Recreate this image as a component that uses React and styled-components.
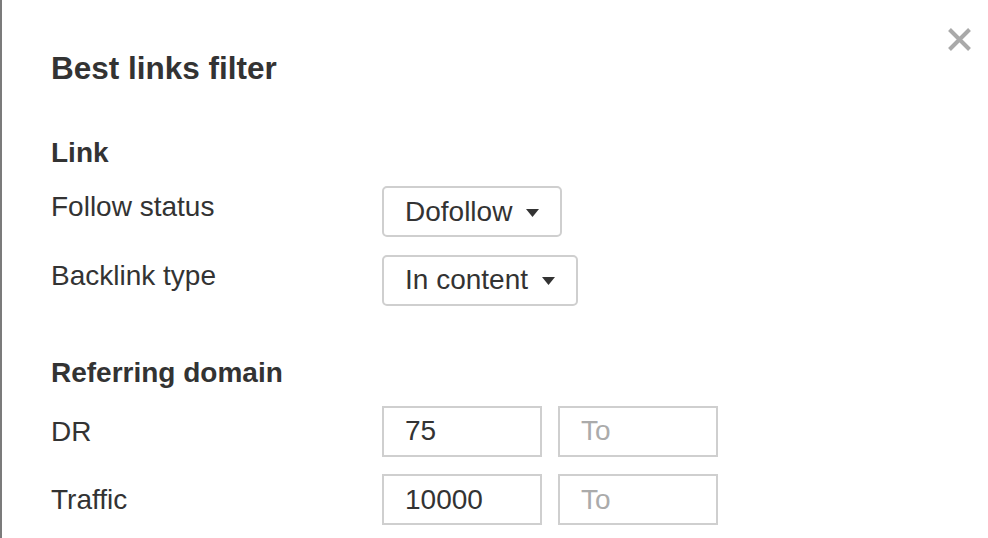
import React from "react";
import styled, { createGlobalStyle } from "styled-components";

const GlobalStyle = createGlobalStyle`
  * { box-sizing: border-box; }
  html, body { margin: 0; padding: 0; background: #fff; }
  body {
    font-family: "Liberation Sans", Arial, Helvetica, sans-serif;
    color: #333;
  }
`;

const Screen = styled.div`
  display: flex;
  width: 988px;
  height: 538px;
  overflow: hidden;
`;

const PageEdge = styled.div`
  width: 2px;
  flex: none;
  background: #7b7b7b;
`;

const Modal = styled.div`
  position: relative;
  flex: 1;
  background: #fff;
  padding: 50px 49px 0;
`;

const CloseButton = styled.button`
  position: absolute;
  top: 28px;
  right: 17px;
  width: 23px;
  height: 23px;
  padding: 0;
  border: 0;
  background: none;
  cursor: pointer;
  display: block;
`;

const Title = styled.h2`
  margin: 0 0 51px;
  font-size: 31.5px;
  line-height: 36px;
  font-weight: 700;
  color: #333;
`;

const Section = styled.section`
  display: flex;
  flex-direction: column;
  margin-bottom: 51px;
`;

const SectionTitle = styled.h3`
  margin: 0 0 17px;
  font-size: 28px;
  line-height: 32px;
  font-weight: 700;
  color: #333;
`;

const Rows = styled.div`
  display: flex;
  flex-direction: column;
  gap: 17.5px;
`;

const Row = styled.div`
  display: grid;
  grid-template-columns: 331px auto;
  align-items: start;
`;

const Label = styled.div`
  font-size: 28px;
  line-height: 32px;
  padding-top: ${(p) => p.$offset}px;
  color: #333;
`;

const Controls = styled.div`
  display: flex;
  gap: 16px;
`;

const Select = styled.button`
  display: inline-flex;
  align-items: center;
  gap: 14px;
  height: 51px;
  padding: 0 21px;
  border: 2px solid #cfcfcf;
  border-radius: 5px;
  background: #fff;
  font-family: inherit;
  font-size: 28px;
  line-height: 32px;
  color: #333;
  justify-self: start;
`;

const CaretIcon = styled.svg`
  display: block;
  flex: none;
  width: 13px;
  height: 8px;
  margin-top: 2px;
`;

const Input = styled.input`
  width: 160px;
  height: 51px;
  padding: 0 21px;
  border: 2px solid #cfcfcf;
  border-radius: 0;
  background: #fff;
  font-family: inherit;
  font-size: 28px;
  color: #333;
  outline: none;
  &::placeholder { color: #ababab; }
`;

function CloseIcon() {
  return (
    <svg width="23" height="23" viewBox="0 0 23 23">
      <path
        d="M1.5 1.5 L21.5 21.5 M21.5 1.5 L1.5 21.5"
        stroke="#a9a9a9"
        strokeWidth="4"
        strokeLinecap="butt"
        fill="none"
      />
    </svg>
  );
}

function Dropdown({ value }) {
  return (
    <Select type="button">
      {value}
      <CaretIcon viewBox="0 0 13 8">
        <polygon points="0,0 13,0 6.5,8" fill="#333" />
      </CaretIcon>
    </Select>
  );
}

function RangeRow({ label, from }) {
  return (
    <Row>
      <Label $offset={10}>{label}</Label>
      <Controls>
        <Input defaultValue={from} />
        <Input placeholder="To" />
      </Controls>
    </Row>
  );
}

export default function App() {
  return (
    <>
      <GlobalStyle />
      <Screen>
        <PageEdge />
        <Modal>
          <CloseButton aria-label="Close">
            <CloseIcon />
          </CloseButton>
          <Title>Best links filter</Title>
          <Section>
            <SectionTitle>Link</SectionTitle>
            <Rows>
              <Row>
                <Label $offset={5}>Follow status</Label>
                <Dropdown value="Dofollow" />
              </Row>
              <Row>
                <Label $offset={5}>Backlink type</Label>
                <Dropdown value="In content" />
              </Row>
            </Rows>
          </Section>
          <Section>
            <SectionTitle>Referring domain</SectionTitle>
            <Rows>
              <RangeRow label="DR" from="75" />
              <RangeRow label="Traffic" from="10000" />
            </Rows>
          </Section>
        </Modal>
      </Screen>
    </>
  );
}
